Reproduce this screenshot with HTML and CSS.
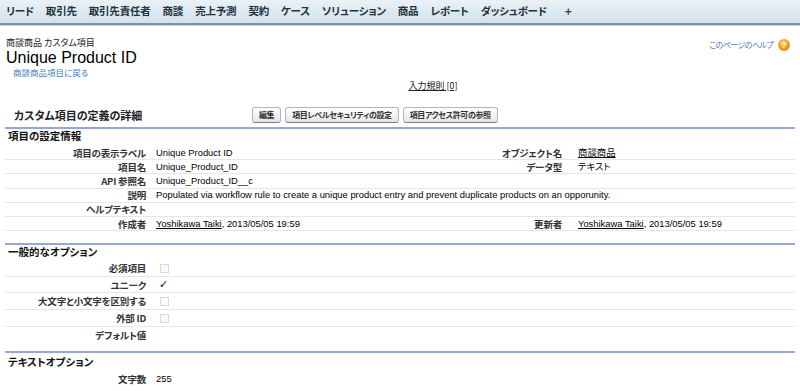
FILE: index.html
```html
<!DOCTYPE html>
<html lang="ja">
<head>
<meta charset="utf-8">
<title>Unique Product ID</title>
<link rel="stylesheet" href="styles.css">
</head>
<body>
<nav class="tabs">
  <a class="tab">リード</a>
  <a class="tab">取引先</a>
  <a class="tab">取引先責任者</a>
  <a class="tab">商談</a>
  <a class="tab">売上予測</a>
  <a class="tab">契約</a>
  <a class="tab">ケース</a>
  <a class="tab">ソリューション</a>
  <a class="tab">商品</a>
  <a class="tab">レポート</a>
  <a class="tab">ダッシュボード</a>
  <a class="tab plus">+</a>
</nav>
<main class="page">
  <header class="head">
    <div class="head-left">
      <div class="crumb">商談商品 カスタム項目</div>
      <h1 class="title">Unique Product ID</h1>
      <a class="back">商談商品項目に戻る</a>
    </div>
    <a class="help">このページのヘルプ <span class="help-icon">?</span></a>
  </header>
  <div class="rules"><a class="rules-link">入力規則 [0]</a></div>

  <section class="block">
    <div class="block-head">
      <h2 class="block-title">カスタム項目の定義の詳細</h2>
      <div class="buttons">
        <button class="btn">編集</button>
        <button class="btn">項目レベルセキュリティの設定</button>
        <button class="btn">項目アクセス許可の参照</button>
      </div>
    </div>

    <h3 class="sub">項目の設定情報</h3>
    <div class="grid">
      <div class="row">
        <div class="lbl">項目の表示ラベル</div><div class="val">Unique Product ID</div>
        <div class="lbl">オブジェクト名</div><div class="val"><a class="ul">商談商品</a></div>
      </div>
      <div class="row">
        <div class="lbl">項目名</div><div class="val">Unique_Product_ID</div>
        <div class="lbl">データ型</div><div class="val">テキスト</div>
      </div>
      <div class="row">
        <div class="lbl">API 参照名</div><div class="val wide">Unique_Product_ID__c</div>
      </div>
      <div class="row">
        <div class="lbl">説明</div><div class="val wide">Populated via workflow rule to create a unique product entry and prevent duplicate products on an opporunity.</div>
      </div>
      <div class="row">
        <div class="lbl">ヘルプテキスト</div><div class="val wide"></div>
      </div>
      <div class="row">
        <div class="lbl">作成者</div><div class="val"><a class="ul">Yoshikawa Taiki</a>, 2013/05/05 19:59</div>
        <div class="lbl">更新者</div><div class="val"><a class="ul">Yoshikawa Taiki</a>, 2013/05/05 19:59</div>
      </div>
    </div>

    <h3 class="sub sep">一般的なオプション</h3>
    <div class="grid opts">
      <div class="row tall"><div class="lbl">必須項目</div><div class="val wide"><span class="cb"></span></div></div>
      <div class="row tall"><div class="lbl">ユニーク</div><div class="val wide"><span class="check">✓</span></div></div>
      <div class="row tall"><div class="lbl">大文字と小文字を区別する</div><div class="val wide"><span class="cb"></span></div></div>
      <div class="row tall"><div class="lbl">外部 ID</div><div class="val wide"><span class="cb"></span></div></div>
      <div class="row tall last"><div class="lbl">デフォルト値</div><div class="val wide"></div></div>
    </div>

    <h3 class="sub sep sep3">テキストオプション</h3>
    <div class="grid text-opts">
      <div class="row tall last"><div class="lbl">文字数</div><div class="val wide">255</div></div>
    </div>
  </section>
</main>
</body>
</html>
```
FILE: styles.css
```css
* { box-sizing: border-box; }
html, body { margin: 0; padding: 0; background: #fff; }
body {
  font-family: "Liberation Sans", "Noto Sans CJK JP", sans-serif;
  font-feature-settings: "palt";
  color: #000;
  overflow: hidden;
}
a { color: inherit; text-decoration: none; }

.tabs {
  display: flex;
  align-items: center;
  gap: 12px;
  height: 25px;
  padding: 0 0 2px 6px;
  background: linear-gradient(#e9f1f6, #d2e2ec);
  border-bottom: 2px solid #7f93a6;
  box-shadow: 0 1px 0 #c4ced6;
}
.tab {
  font-family: "Noto Sans CJK JP", sans-serif;
  font-feature-settings: "palt";
  font-size: 10.5px;
  font-weight: 700;
  letter-spacing: -0.2px;
  color: #22323e;
  line-height: 14px;
}
.tab.plus { margin-left: 6px; font-size: 12px; color: #33414c; }

.page { padding: 0 5px; }

.head {
  display: flex;
  justify-content: space-between;
  align-items: flex-start;
  margin-top: 11px;
}
.head-left { padding-left: 1px; }
.crumb {
  font-family: "Noto Sans CJK JP", sans-serif;
  font-size: 9px;
  line-height: 13px;
  color: #222;
}
.title {
  margin: 0;
  font-size: 16px;
  font-weight: 400;
  line-height: 17px;
  color: #000;
}
.back {
  display: block;
  padding-left: 7px;
  font-family: "Noto Sans CJK JP", sans-serif;
  font-size: 8.5px;
  line-height: 12px;
  color: #3d7fc1;
}
.help {
  display: flex;
  align-items: center;
  gap: 5px;
  margin-top: 3px;
  padding-right: 5px;
  font-family: "Noto Sans CJK JP", sans-serif;
  font-size: 8px;
  letter-spacing: -0.6px;
  line-height: 12px;
  color: #3d7fc1;
}
.help-icon {
  display: inline-flex;
  align-items: center;
  justify-content: center;
  width: 12px;
  height: 12px;
  border-radius: 50%;
  background: radial-gradient(circle at 40% 35%, #ffc35a, #e8900c 70%, #c9760a);
  color: #fff;
  font-family: "Liberation Sans", sans-serif;
  font-size: 9px;
  font-weight: 700;
  letter-spacing: 0;
  line-height: 12px;
}

.rules {
  margin-top: 2px;
  text-align: center;
  padding-left: 66px;
  font-family: "Noto Sans CJK JP", sans-serif;
  font-size: 9px;
  line-height: 12px;
}
.rules-link { text-decoration: underline; color: #222; }

.block { margin-top: 11px; }
.block-head {
  display: flex;
  align-items: center;
  height: 26px;
  padding-left: 9px;
  border-bottom: 2px solid #97a7d4;
}
.block-title {
  margin: 0;
  width: 238px;
  font-family: "Noto Sans CJK JP", sans-serif;
  font-size: 11px;
  font-weight: 700;
  line-height: 16px;
  color: #222;
}
.buttons { display: flex; gap: 4px; }
.btn {
  height: 16px;
  padding: 0 6px;
  border: 1px solid #b5b5b5;
  border-bottom-color: #7f7f7f;
  border-radius: 3px;
  background: linear-gradient(#ffffff, #e6e6e6);
  font-family: "Noto Sans CJK JP", sans-serif;
  font-feature-settings: "palt";
  font-size: 8px;
  font-weight: 700;
  letter-spacing: -0.4px;
  line-height: 14px;
  color: #333;
}

.sub {
  margin: 0;
  padding: 0 0 3px 3px;
  font-family: "Noto Sans CJK JP", sans-serif;
  font-size: 10.5px;
  font-weight: 700;
  line-height: 14px;
  color: #111;
}
.sub.sep {
  margin-top: 12px;
  padding-top: 0;
  padding-bottom: 0;
  border-top: 2px solid #97a7d4;
  line-height: 14px;
}
.sub.sep3 { margin-top: 8px; padding-top: 1px; line-height: 16px; }

.grid { display: flex; flex-direction: column; }
.row {
  display: grid;
  grid-template-columns: 145px 270px 148px 1fr;
  height: 14.2px;
  align-items: center;
  border-bottom: 1px solid #e6e6e6;
}
.row.tall { height: 16.6px; }
.row.last { border-bottom: none; }
.opts { margin-top: 1px; }
.text-opts { margin-top: 0; }
.text-opts .row { height: 18px; }
.lbl {
  padding-right: 4px;
  text-align: right;
  font-family: "Noto Sans CJK JP", sans-serif;
  font-size: 9.5px;
  font-weight: 700;
  letter-spacing: -0.2px;
  line-height: 12px;
  color: #333;
  white-space: nowrap;
}
.val {
  padding-left: 6px;
  font-size: 9.4px;
  line-height: 12px;
  color: #000;
  white-space: nowrap;
}
.row .lbl:nth-child(3) { padding-right: 6px; }
.row .val:nth-child(4) { padding-left: 10px; }
.val.wide { grid-column: 2 / 5; }
.ul { text-decoration: underline; }
.cb {
  display: inline-block;
  width: 9px;
  height: 9px;
  margin-left: 4px;
  border: 1px solid #d8d8d8;
  background: #fafafa;
  vertical-align: middle;
}
.check {
  display: inline-block;
  margin-left: 3px;
  font-family: "DejaVu Sans", sans-serif;
  font-size: 11px;
  line-height: 12px;
  color: #111;
}
```
